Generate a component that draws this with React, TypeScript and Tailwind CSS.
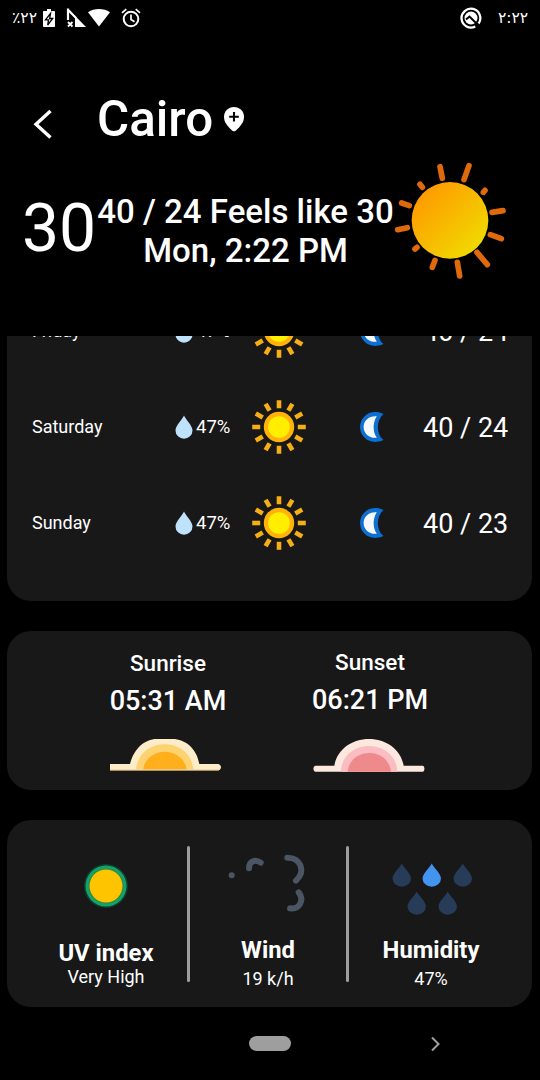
import React from "react";

function StatusBar() {
  return (
    <div className="flex h-9 items-center pl-[12px] pr-[12px]">
      <span className="w-[27px] text-[15.500px] leading-9 whitespace-nowrap font-['DejaVu_Sans',sans-serif]">٪٢٢</span>
      <svg className="ml-[4px]" width="12" height="20" viewBox="0 0 12 20">
        <path d="M4 1h4v2h3.2c.5 0 .8.300.8.800v14.400c0 .5-.3.800-.8.800H.8c-.5 0-.8-.3-.8-.8V3.800C0 3.300.3 3 .8 3H4z" fill="#fff" />
        <path d="M7.500 5.500 2.500 11.800h3L4.700 17l5-6.500h-3z" fill="#fff" stroke="#000" strokeWidth="1.300" />
      </svg>
      <svg className="ml-[11px]" width="20" height="20" viewBox="0 0 20 20">
        <path d="M2 .5V12M1.500 1.200 10 10" stroke="#fff" strokeWidth="2.200" fill="none" />
        <path d="M9 7.800 20 19H9z" fill="#fff" />
        <path d="M2 14l4.500 4.500M6.500 14 2 18.500" stroke="#fff" strokeWidth="1.800" />
      </svg>
      <svg className="ml-[1px]" width="24" height="20" viewBox="0 0 24 20">
        <path d="M1 4.200C7.500-.2 16.500-.2 23 4.200L12 18.500z" fill="#fff" />
      </svg>
      <svg className="ml-[10px]" width="20" height="20" viewBox="0 0 20 20" fill="none" stroke="#fff" strokeWidth="2">
        <circle cx="10" cy="11" r="7.300" />
        <path d="M10 6.500v5l3.500 2.200M1 4.800 5.300 1.200M19 4.800l-4.300-3.600" strokeWidth="1.700" />
      </svg>
      <svg className="ml-auto" width="22" height="22" viewBox="0 0 22 22" fill="none" stroke="#fff">
        <path d="M18.600 16.500A9.400 9.400 0 1 0 15.300 19.400" strokeWidth="2.300" />
        <circle cx="11" cy="11" r="6.500" fill="#fff" stroke="none" />
        <path d="M6 12.500 9.500 9.500l7.500 7.500" stroke="#000" strokeWidth="2" />
      </svg>
      <span className="ml-[16px] w-[30px] text-[15.500px] leading-9 whitespace-nowrap font-['DejaVu_Sans',sans-serif]">٢:٢٢</span>
    </div>
  );
}

const rays = [
  "M210 50 217 85", "M297 47 282 89", "M150 103 157 112", "M345 121 340 127",
  "M95 159 118 167", "M83 239 112 233", "M366 187 399 182", "M361 254 394 266",
  "M135 297 141 292", "M195 331 187 352", "M262 337 269 378", "M321 307 352 344",
];

function Header() {
  return (
    <header className="h-[336px] shrink-0">
      <StatusBar />
      <div className="mt-[56px] flex h-[56px] pl-[32px]">
        <svg className="mt-[16px] shrink-0" width="22" height="32" viewBox="0 0 22 32">
          <path d="M18.500 3 4 16.200 18.500 29.500" fill="none" stroke="#fff" strokeWidth="3.400" />
        </svg>
        <h1 className="ml-[43px] w-[127px] text-[49.300px] leading-[55px] font-medium">Cairo</h1>
        <svg className="mt-[15px]" width="20" height="25" viewBox="0 0 20 25">
          <path d="M10 0C4.300 0 0 4.300 0 9.700c0 5 3 9.300 8.400 14 1 .8 2.200.8 3.200 0C17 19 20 14.700 20 9.700 20 4.300 15.700 0 10 0z" fill="#fff" />
          <path d="M10 5v9.600M5.200 9.800h9.600" stroke="#000" strokeWidth="2.100" />
        </svg>
      </div>
      <div className="flex pl-[22px]">
        <div className="mt-[42px] w-[75px] text-[66px] leading-[78px]">30</div>
        <div className="mt-[44px] w-[297px] text-center text-[33px] leading-[39px] font-medium whitespace-nowrap">
          <p>40 / 24 Feels like 30</p>
          <p>Mon, 2:22 PM</p>
        </div>
        <svg className="mt-[12px] -ml-px" width="117" height="125" viewBox="69 30 351 375">
          <defs>
            <linearGradient id="disc" x1="0" y1="0" x2="1" y2="1">
              <stop offset="0.100" stopColor="#ff9800" />
              <stop offset="0.900" stopColor="#f0dc00" />
            </linearGradient>
          </defs>
          <path d={rays.join("")} stroke="#e0690c" strokeWidth="17" strokeLinecap="round" />
          <circle cx="240" cy="211" r="115" fill="url(#disc)" />
        </svg>
      </div>
    </header>
  );
}

function Drop({ className, width, height, fill }: { className?: string; width: number; height: number; fill: string }) {
  return (
    <svg className={className} width={width} height={height} viewBox="0 0 18 24" preserveAspectRatio="none">
      <path d="M9 .5C7 5 .5 10.500.5 15.500a8.500 8.300 0 0 0 17 0C17.500 10.500 11 5 9 .5z" fill={fill} />
    </svg>
  );
}

function SmallSun() {
  return (
    <svg width="60" height="60" viewBox="-30 -30 60 60">
      <g stroke="#f5ae16" strokeWidth="4.600">
        {[0, 30, 60, 90, 120, 150, 180, 210, 240, 270, 300, 330].map((a) => (
          <path key={a} d="M0-18.800V-26.800" transform={`rotate(${a})`} />
        ))}
      </g>
      <circle r="15.200" fill="#ffb30a" />
      <circle r="10.800" fill="#ffee00" />
    </svg>
  );
}

function Moon() {
  return (
    <svg className="ml-[50px]" width="27" height="32" viewBox="0 0 27 32">
      <path d="M24.500 2.900C21 1.200 18.500 1 16 1a15 15 0 0 0 0 30c2.500 0 5-.2 8.500-1.900C17 23 17 9.500 24.500 2.900z" fill="#0d6fd2" />
      <path d="M17.800 5.200C10 4.500 4.600 9.500 4.600 16s5.400 11.500 13.200 10.800C13.600 20.500 13.600 11.500 17.800 5.200z" fill="#f4f8ff" />
    </svg>
  );
}

const days = [
  { day: "Friday", rain: "47%", temp: "40 / 24" },
  { day: "Saturday", rain: "47%", temp: "40 / 24" },
  { day: "Sunday", rain: "47%", temp: "40 / 23" },
];

function Forecast() {
  return (
    <section className="h-[265px] shrink-0 overflow-hidden rounded-b-[24px] bg-[#181818]">
      <div className="-mt-[53px]">
        {days.map((d) => (
          <div key={d.day} className="grid h-24 grid-cols-[143px_74px_60px_114px_110px] items-center pl-[25px]">
            <span className="text-[18px] leading-[22px]">{d.day}</span>
            <span className="flex items-center text-[18.500px] leading-[22px]">
              <Drop width={18} height={24} fill="#bfe2fb" />
              <span className="ml-[3px]">{d.rain}</span>
            </span>
            <SmallSun />
            <Moon />
            <span className="pt-[2px] text-[27px] leading-8 whitespace-nowrap">{d.temp}</span>
          </div>
        ))}
      </div>
    </section>
  );
}

function SunTimes() {
  return (
    <section className="mt-[30px] flex h-[159px] shrink-0 rounded-[24px] bg-[#181818] pl-[60px]">
      <div className="flex w-[202px] flex-col items-center pt-[19px]">
        <h2 className="text-[22.500px] leading-[26px] font-medium">Sunrise</h2>
        <p className="mt-[9px] text-[27px] leading-8 font-medium">05:31 AM</p>
        <svg className="mt-[22px] mr-[5px]" width="111" height="32" viewBox="60 297 333 96">
          <path d="M60 372h60C132 325 165 297 200 297h48C285 297 320 325 328 372h53c10 0 12 6 12 10s-3 10-12 10H60z" fill="#fdecc8" />
          <path d="M138 388C143 340 180 313 224 313s81 27 86 75z" fill="#fdd271" />
          <path d="M160 388c3-30 30-53 64-53s62 23 66 53z" fill="#ffae1c" />
          <path d="M60 391H387" stroke="#a98b55" strokeWidth="3" />
        </svg>
      </div>
      <div className="flex w-[202px] flex-col items-center pt-[18px]">
        <h2 className="text-[22.500px] leading-[26px] font-medium">Sunset</h2>
        <p className="mt-[9px] text-[27px] leading-8 font-medium">06:21 PM</p>
        <svg className="mt-[23px] mr-[2px]" width="112" height="33" viewBox="68 298 336 99">
          <path d="M76 378h56c8-48 52-80 104-80s96 32 104 80h57c7 0 7 18 0 18H76c-9 0-9-18 0-18z" fill="#fde8e0" />
          <path d="M152 396c0-45 38-77 84-77s84 32 85 77z" fill="#fbbdc2" />
          <path d="M172 396c2-32 30-56 65-56s62 24 65 56z" fill="#ef8a8c" />
        </svg>
      </div>
    </section>
  );
}

function Details() {
  return (
    <section className="mt-[30px] flex h-[187px] shrink-0 rounded-[24px] bg-[#181818] pl-[18px]">
      <div className="flex w-[162px] flex-col items-center pt-[42px]">
        <svg width="48" height="48" viewBox="-24 -24 48 48">
          <circle r="22" fill="#123c2e" />
          <circle r="20.500" fill="#10a36b" />
          <circle r="17.500" fill="#34853c" />
          <circle r="16.500" fill="#ffc400" />
        </svg>
        <h2 className="mt-[29px] text-[23.800px] leading-7 font-bold">UV index</h2>
        <p className="-mt-px text-[18px] leading-[22px]">Very High</p>
      </div>
      <div className="mt-[26px] h-[136px] w-[3px] rounded-full bg-[#9e9e9e]" />
      <div className="flex w-[156px] flex-col items-center pt-[30px]">
        <svg width="80" height="66" viewBox="113 60 240 198" fill="none" stroke="#4a5663" strokeWidth="18" strokeLinecap="round">
          <circle cx="124" cy="136" r="9" fill="#4a5663" stroke="none" />
          <path d="M176 115C176 92 196 87 211 98" />
          <path d="M291 83C330 82 348 123 317 152" />
          <path d="M325 187C343 210 328 239 299 235" />
        </svg>
        <h2 className="mt-[20px] text-[23.800px] leading-7 font-bold">Wind</h2>
        <p className="mt-[4px] text-[18px] leading-[22px]">19 k/h</p>
      </div>
      <div className="mt-[26px] h-[136px] w-[3px] rounded-full bg-[#9e9e9e]" />
      <div className="flex w-[164px] flex-col items-center pt-[43px]">
        <div className="ml-[2px] flex gap-[11px]">
          <Drop width={19.500} height={24} fill="#263c58" />
          <Drop width={19.500} height={24} fill="#4294ee" />
          <Drop width={19.500} height={24} fill="#263c58" />
        </div>
        <div className="mt-[4px] ml-[2px] flex gap-[11px]">
          <Drop width={19.500} height={24} fill="#263c58" />
          <Drop width={19.500} height={24} fill="#263c58" />
        </div>
        <h2 className="mt-[21px] text-[23.800px] leading-7 font-bold">Humidity</h2>
        <p className="mt-[4px] text-[18px] leading-[22px]">47%</p>
      </div>
    </section>
  );
}

export default function App() {
  return (
    <div className="flex h-[1080px] w-[540px] flex-col overflow-hidden bg-black font-[Roboto,sans-serif] text-white">
      <Header />
      <main className="flex flex-col pr-[8px] pl-[7px]">
        <Forecast />
        <SunTimes />
        <Details />
      </main>
      <nav className="flex h-[73px] items-center pl-[249px]">
        <div className="h-[15px] w-[42px] rounded-full bg-[#9e9e9e]" />
        <svg className="ml-[138px]" width="14" height="18" viewBox="0 0 14 18">
          <path d="M3 2.500 9.500 9 3 15.500" fill="none" stroke="#9e9e9e" strokeWidth="2" />
        </svg>
      </nav>
    </div>
  );
}
